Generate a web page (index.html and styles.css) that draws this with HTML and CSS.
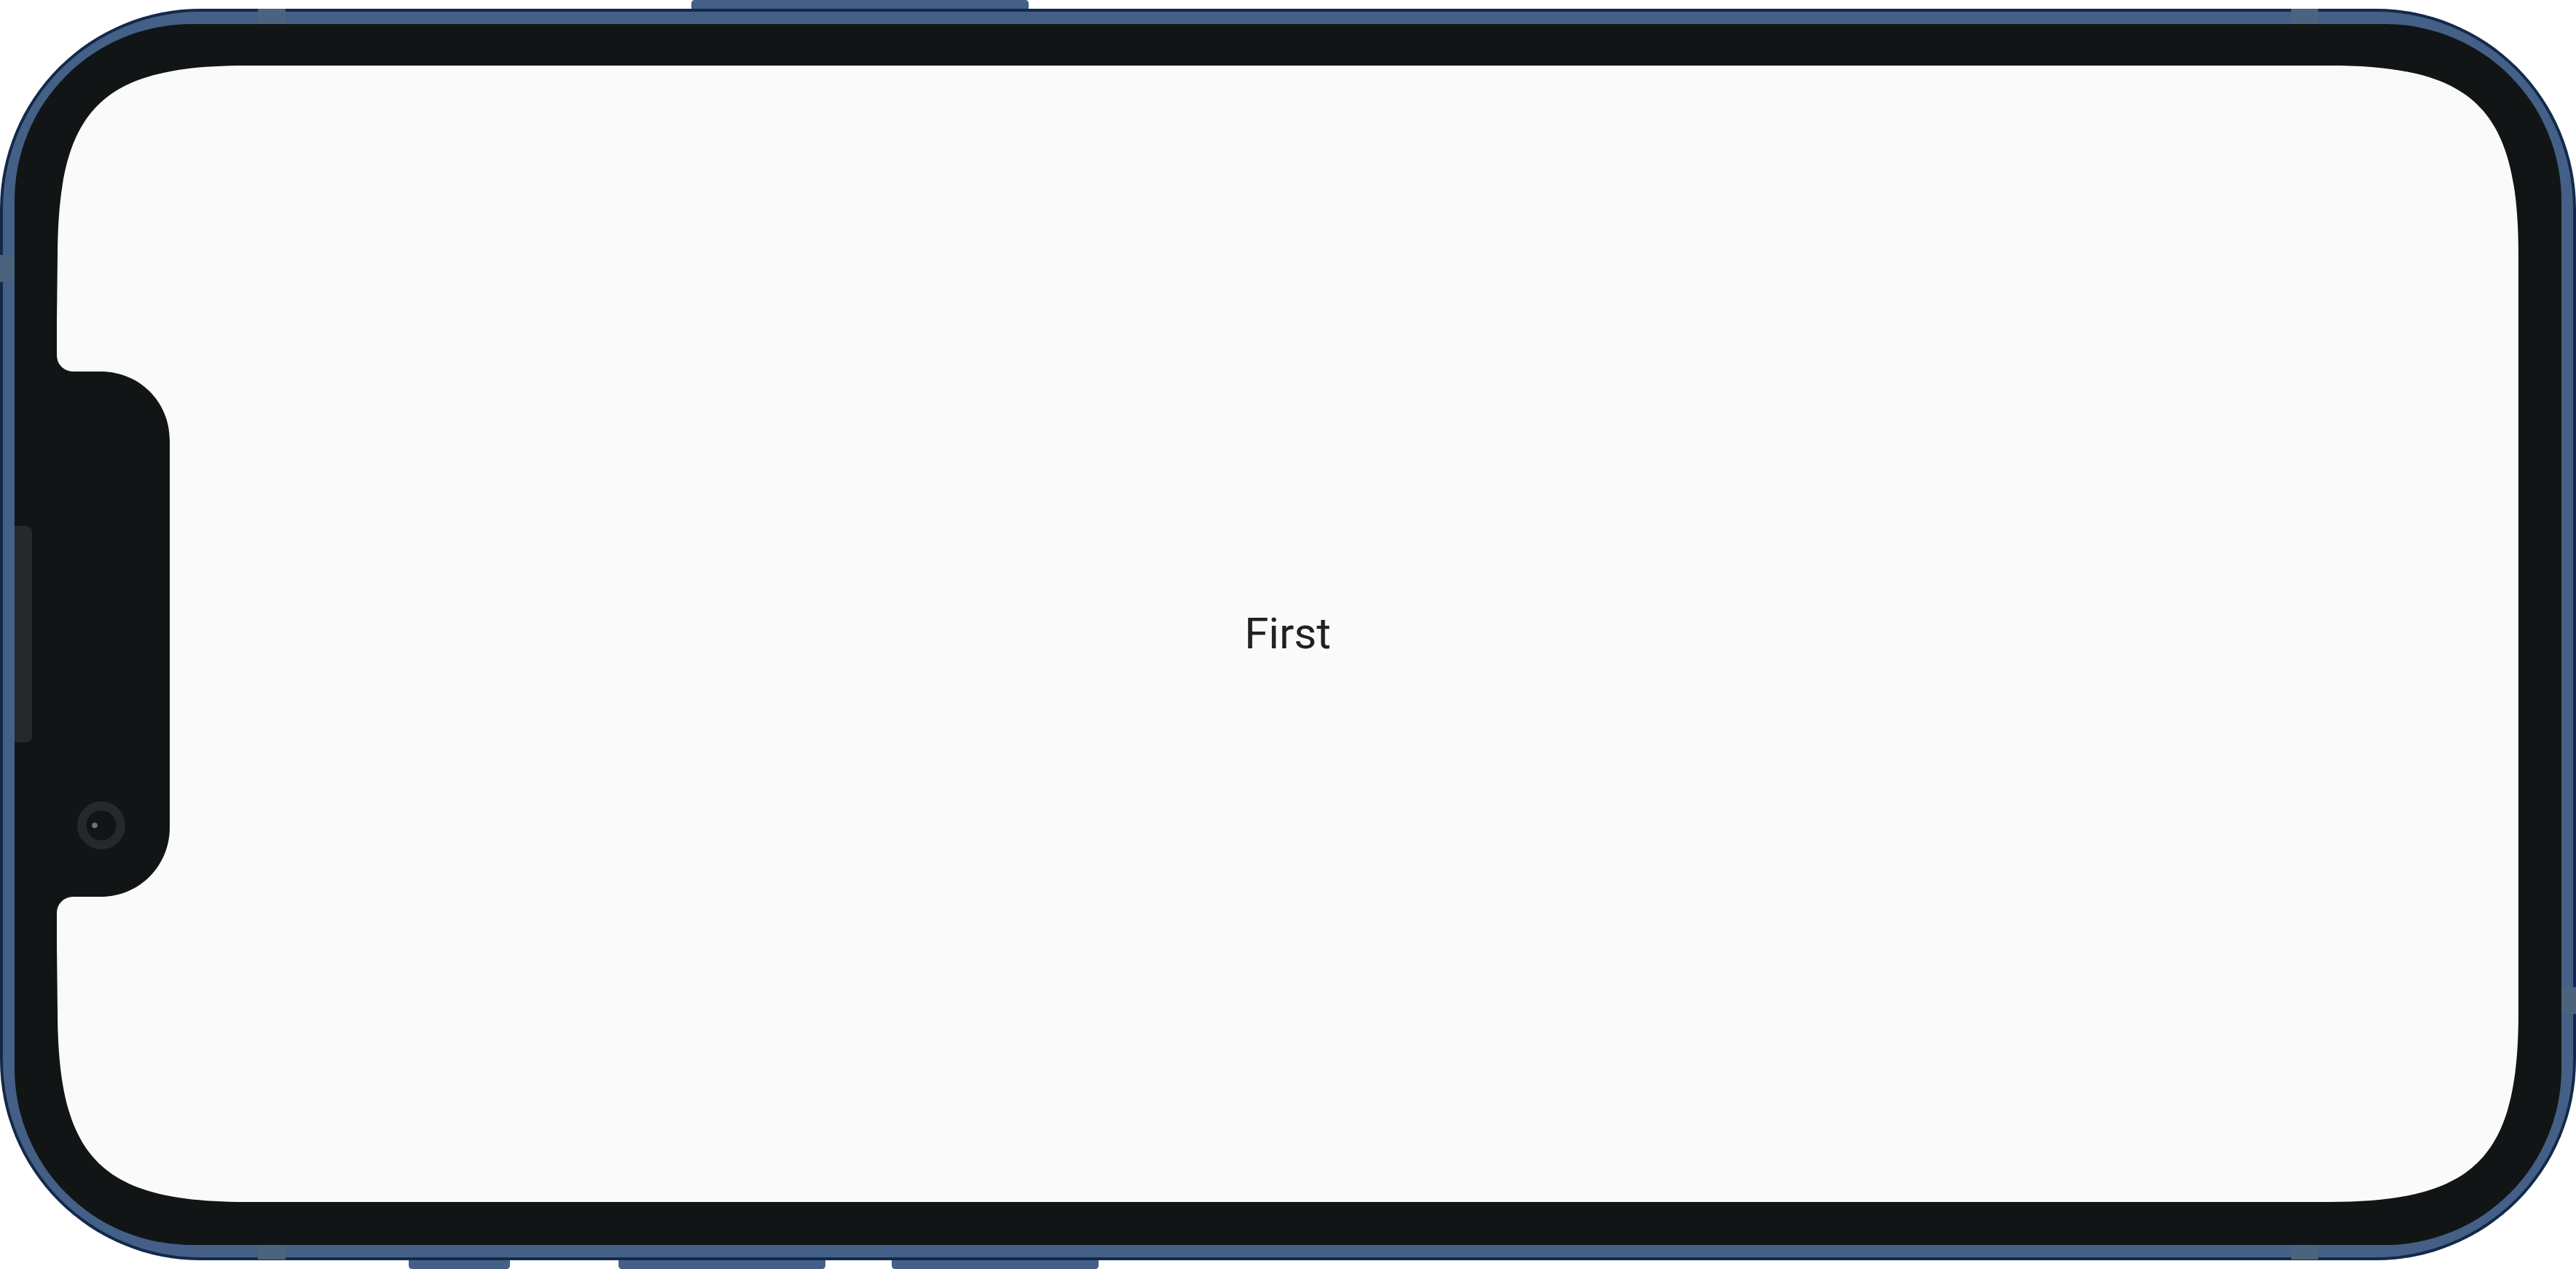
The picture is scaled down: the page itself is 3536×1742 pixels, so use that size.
FILE: index.html
```html
<!DOCTYPE html>
<html lang="en">
<head>
<meta charset="utf-8">
<title>First</title>
<link rel="stylesheet" href="styles.css">
</head>
<body>
<div class="device">
  <svg class="frame" width="3536" height="1742" viewBox="0 0 3536 1742" aria-hidden="true">
    <!-- hardware buttons -->
    <g class="btn">
      <path d="M949 14 V5 Q949 0 954 0 H1407 Q1412 0 1412 5 V14 Z"/>
      <path d="M561 1727 V1737 Q561 1742 566 1742 H695 Q700 1742 700 1737 V1727 Z"/>
      <path d="M849 1727 V1737 Q849 1742 854 1742 H1128 Q1133 1742 1133 1737 V1727 Z"/>
      <path d="M1224 1727 V1737 Q1224 1742 1229 1742 H1503 Q1508 1742 1508 1737 V1727 Z"/>
    </g>
    <!-- outer rim -->
    <path class="rim" d="M275 12 H3261 A275 275 0 0 1 3536 287 V1455 A275 275 0 0 1 3261 1730 H275 A275 275 0 0 1 0 1455 V287 A275 275 0 0 1 275 12 Z"/>
    <!-- band -->
    <path class="band" d="M275 16 H3261 A271 271 0 0 1 3532 287 V1455 A271 271 0 0 1 3261 1726 H275 A271 271 0 0 1 4 1455 V287 A271 271 0 0 1 275 16 Z"/>
    <!-- antenna lines -->
    <g class="antenna">
      <rect x="354" y="12" width="38" height="21"/>
      <rect x="3145" y="12" width="37" height="21"/>
      <rect x="354" y="1709" width="38" height="20"/>
      <rect x="3145" y="1709" width="37" height="20"/>
      <rect x="0" y="350" width="20" height="37"/>
      <rect x="3516" y="1355" width="20" height="37"/>
    </g>
    <!-- bezel -->
    <path class="bezel" d="M262 33 H3274 A242 242 0 0 1 3516 275 V1467 A242 242 0 0 1 3274 1709 H262 A242 242 0 0 1 20 1467 V275 A242 242 0 0 1 262 33 Z"/>
    <!-- speaker -->
    <path class="speaker" d="M20 722 H34 Q44 722 44 732 V1009 Q44 1019 34 1019 H20 Z"/>
    <!-- screen -->
    <path class="display" d="M338 90 H3197 C3397 90 3457 150 3457 350 V1390 C3457 1590 3397 1650 3197 1650 H338 C138 1650 80 1590 79 1390 L78 1300 V440 L79 350 C80 150 138 90 338 90 Z"/>
    <!-- notch -->
    <path class="bezel" d="M60 480 H78 V488 A22 22 0 0 0 100 510 H138 C192 510 233 552 233 604 V1136 C233 1188 192 1231 138 1231 H100 A22 22 0 0 0 78 1253 V1262 H60 Z"/>
    <!-- camera -->
    <circle class="lens-ring" cx="139" cy="1133" r="26.75"/>
    <circle class="lens-dot" cx="130" cy="1133" r="3.8"/>
  </svg>
  <main class="screen">
    <span class="label">First</span>
  </main>
</div>
</body>
</html>
```

FILE: styles.css
```css
html, body {
  margin: 0;
  padding: 0;
  background: #ffffff;
}

body {
  width: 3536px;
  height: 1742px;
  overflow: hidden;
}

.device {
  position: relative;
  width: 3536px;
  height: 1742px;
  box-sizing: border-box;
  padding: 90px 79px 92px 78px;
  display: flex;
}

.frame {
  position: absolute;
  top: 0;
  left: 0;
  z-index: 0;
}

.btn path { fill: #446086; }
.rim { fill: #122a4a; }
.band { fill: #446086; }
.antenna rect { fill: #4b637c; }
.bezel { fill: #121516; }
.speaker { fill: #25292c; }
.display { fill: #fafafa; }
.lens-ring { fill: none; stroke: #25292c; stroke-width: 12.5; }
.lens-dot { fill: #6b7579; }

.screen {
  position: relative;
  z-index: 1;
  flex: 1;
  display: flex;
  align-items: center;
  justify-content: center;
}

.label {
  font-family: Roboto, "Noto Sans", sans-serif;
  font-size: 60px;
  line-height: 1.172;
  color: #212121;
  font-weight: 400;
}
```
